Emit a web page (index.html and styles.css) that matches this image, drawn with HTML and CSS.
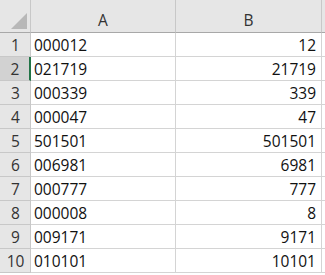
FILE: index.html
```html
<!DOCTYPE html>
<html lang="en">
<head>
  <meta charset="UTF-8">
  <title>Sheet1</title>
  <link rel="stylesheet" href="styles.css">
</head>
<body>
  <div class="sheet">
    <div class="corner"><span class="tri"></span></div>
    <div class="colhead">A</div>
    <div class="colhead">B</div>
    <div class="colhead rest"></div>

    <div class="rowhead">1</div><div class="cell">000012</div><div class="cell num">12</div><div class="cell rest"></div>
    <div class="rowhead active">2</div><div class="cell">021719</div><div class="cell num">21719</div><div class="cell rest"></div>
    <div class="rowhead">3</div><div class="cell">000339</div><div class="cell num">339</div><div class="cell rest"></div>
    <div class="rowhead">4</div><div class="cell">000047</div><div class="cell num">47</div><div class="cell rest"></div>
    <div class="rowhead">5</div><div class="cell">501501</div><div class="cell num">501501</div><div class="cell rest"></div>
    <div class="rowhead">6</div><div class="cell">006981</div><div class="cell num">6981</div><div class="cell rest"></div>
    <div class="rowhead">7</div><div class="cell">000777</div><div class="cell num">777</div><div class="cell rest"></div>
    <div class="rowhead">8</div><div class="cell">000008</div><div class="cell num">8</div><div class="cell rest"></div>
    <div class="rowhead">9</div><div class="cell">009171</div><div class="cell num">9171</div><div class="cell rest"></div>
    <div class="rowhead">10</div><div class="cell">010101</div><div class="cell num">10101</div><div class="cell rest"></div>
  </div>
</body>
</html>
```

FILE: styles.css
```css
body {
  margin: 0;
  background: #fff;
  font-family: "Open Sans", "Liberation Sans", sans-serif;
  font-size: 15.5px;
  color: #111;
}
.sheet {
  display: grid;
  grid-template-columns: 31px 145px 146px 1fr;
  grid-template-rows: 33px repeat(10, 24px);
  width: 325px;
  height: 275px;
  overflow: hidden;
}
.sheet > div {
  box-sizing: border-box;
  white-space: nowrap;
  overflow: hidden;
}
.corner {
  position: relative;
  background: #e6e6e6;
  border-right: 1px solid #c8c8c8;
  border-bottom: 1px solid #a8a8a8;
}
.tri {
  position: absolute;
  right: 3px;
  bottom: 3px;
  width: 0;
  height: 0;
  border-left: 16px solid transparent;
  border-bottom: 16px solid #b8b8b8;
}
.colhead {
  background: #e6e6e6;
  border-right: 1px solid #c8c8c8;
  border-bottom: 1px solid #a8a8a8;
  color: #333;
  display: flex;
  align-items: flex-end;
  justify-content: center;
  padding-bottom: 1px;
}
.colhead.rest {
  border-right: none;
}
.rowhead {
  background: #e6e6e6;
  border-right: 1px solid #c8c8c8;
  border-bottom: 1px solid #c8c8c8;
  color: #333;
  display: flex;
  align-items: center;
  justify-content: center;
  padding-left: 1px;
}
.rowhead.active {
  background: #d2d2d2;
  border-right: 2px solid #217346;
}
.cell {
  border-right: 1px solid #d4d4d4;
  border-bottom: 1px solid #d4d4d4;
  display: flex;
  align-items: center;
  padding: 0 3px;
}
.cell.num {
  justify-content: flex-end;
  padding-right: 5px;
}
.cell.rest {
  border-right: none;
}
```
